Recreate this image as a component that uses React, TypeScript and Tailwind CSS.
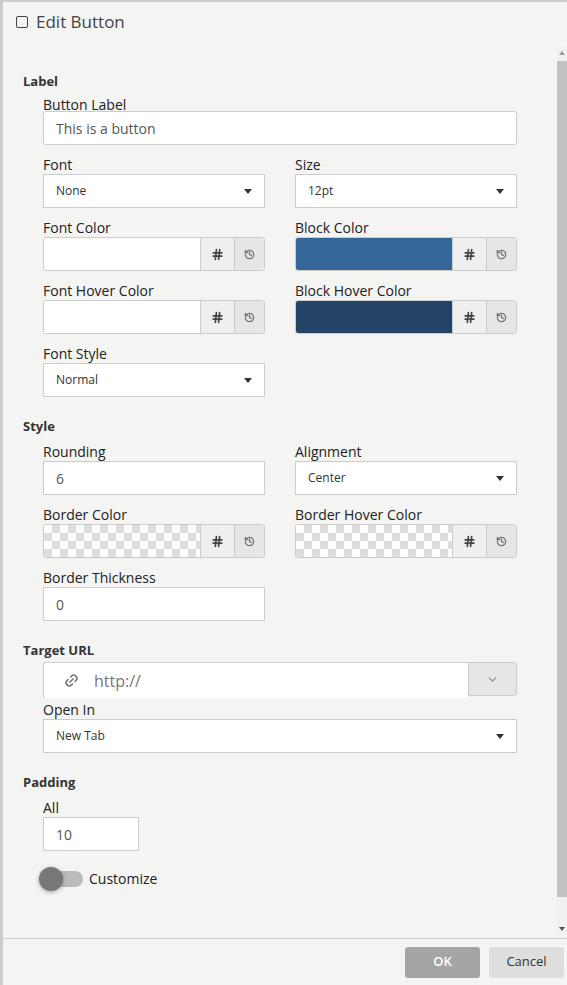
import { ChevronDown, Hash, History, Link2 } from 'lucide-react';

function Caret() {
  return <span className="ml-auto h-0 w-0 border-x-[4px] border-t-[5px] border-x-transparent border-t-[#333]" />;
}

function Select({ value }: { value: string }) {
  return (
    <div className="flex h-[34px] items-center border border-[#ccc] bg-white px-3 text-[12px] text-[#333]">
      {value}
      <Caret />
    </div>
  );
}

function TextInput({ value, className = '' }: { value: string; className?: string }) {
  return (
    <div className={`flex h-[34px] items-center rounded-[3px] border border-[#ccc] bg-white px-3 text-[14px] text-[#555] ${className}`}>
      {value}
    </div>
  );
}

const checker =
  'bg-white bg-[linear-gradient(45deg,#ddd_25%,transparent_25%,transparent_75%,#ddd_75%),linear-gradient(45deg,#ddd_25%,transparent_25%,transparent_75%,#ddd_75%)] bg-[length:16px_16px] bg-[position:0_0,8px_8px]';

function ColorInput({ swatch }: { swatch: string }) {
  return (
    <div className="flex h-[34px] overflow-hidden rounded-[3px] border border-[#ccc]">
      <div className={`flex-1 ${swatch}`} />
      <div className="flex w-[34px] items-center justify-center border-l border-[#ccc] bg-[#efefef]">
        <Hash size={13} strokeWidth={3} className="text-[#444]" />
      </div>
      <div className="flex w-[30px] items-center justify-center border-l border-[#ccc] bg-[#e6e6e6]">
        <History size={11} strokeWidth={3} className="text-[#777]" />
      </div>
    </div>
  );
}

function Field({ label, children }: { label: string; children: React.ReactNode }) {
  return (
    <div>
      <div className="text-[14px] leading-[18px] text-[#222]">{label}</div>
      {children}
    </div>
  );
}

function Section({ title }: { title: string }) {
  return <div className="text-[13px] font-bold leading-[18px] text-[#333]">{title}</div>;
}

export default function App() {
  return (
    <div
      className="flex h-[985px] w-[567px] flex-col border-l-[3px] border-t-2 border-[#ccc] bg-[#f4f4f2]"
      style={{ fontFamily: '"Open Sans", sans-serif' }}
    >
      <div className="flex h-[40px] items-center gap-[8px] pl-[13px] text-[17px] text-[#444]">
        <span className="h-[12px] w-[12px] rounded-[2px] border-[1.5px] border-[#444]" />
        Edit Button
      </div>
      <div className="flex min-h-0 flex-1">
        <div className="flex-1 pl-[20px] pr-[40px] pt-[30px]">
          <Section title="Label" />
          <div className="mt-[6px] flex flex-col gap-[11px] pl-[20px]">
            <Field label="Button Label">
              <div className="mt-[-3px]" />
              <TextInput value="This is a button" />
            </Field>
            <div className="grid grid-cols-2 gap-x-[30px] gap-y-[11px]">
              <Field label="Font"><Select value="None" /></Field>
              <Field label="Size"><Select value="12pt" /></Field>
              <Field label="Font Color"><ColorInput swatch="bg-white" /></Field>
              <Field label="Block Color"><ColorInput swatch="bg-[#336699]" /></Field>
              <Field label="Font Hover Color"><ColorInput swatch="bg-white" /></Field>
              <Field label="Block Hover Color"><ColorInput swatch="bg-[#234466]" /></Field>
              <Field label="Font Style"><Select value="Normal" /></Field>
            </div>
          </div>
          <div className="mt-[20px]"><Section title="Style" /></div>
          <div className="mt-[8px] grid grid-cols-2 gap-x-[30px] gap-y-[11px] pl-[20px]">
            <Field label="Rounding"><TextInput value="6" className="rounded-none" /></Field>
            <Field label="Alignment"><Select value="Center" /></Field>
            <Field label="Border Color"><ColorInput swatch={checker} /></Field>
            <Field label="Border Hover Color"><ColorInput swatch={checker} /></Field>
            <Field label="Border Thickness"><TextInput value="0" className="rounded-none" /></Field>
          </div>
          <div className="mt-[20px]"><Section title="Target URL" /></div>
          <div className="mt-[3px] flex flex-col gap-[9px] pl-[20px]">
            <div className="flex h-[36px]">
              <div className="flex flex-1 items-center gap-[15px] rounded-tl-[3px] border-l border-t border-[#ccc] bg-white pl-[20px] text-[16px] text-[#777]">
                <Link2 size={15} className="-rotate-45 text-[#777]" strokeWidth={2.5} />
                http://
              </div>
              <div className="flex h-[34px] w-[49px] items-center justify-center rounded-r-[3px] border border-[#ccc] bg-[#e6e6e6]">
                <ChevronDown size={13} className="text-[#888]" />
              </div>
            </div>
            <div className="-mt-[6px]">
              <Field label="Open In"><Select value="New Tab" /></Field>
            </div>
          </div>
          <div className="mt-[20px]"><Section title="Padding" /></div>
          <div className="mt-[8px] pl-[20px]">
            <Field label="All"><TextInput value="10" className="w-[96px] rounded-none" /></Field>
            <div className="mt-[17px] flex items-center gap-[6px]">
              <div className="relative h-[16px] w-[40px] rounded-full bg-[#bbb]">
                <span className="absolute -left-[4px] -top-[4px] h-[24px] w-[24px] rounded-full bg-[#777] shadow-[0_1px_4px_rgba(0,0,0,0.35)]" />
              </div>
              <span className="text-[14px] text-[#222]">Customize</span>
            </div>
          </div>
        </div>
        <div className="mt-[5px] mb-[3px] flex w-[10px] flex-col items-center bg-[#f1f1f1]">
          <span className="mt-[4px] h-0 w-0 border-x-[3px] border-b-[4px] border-x-transparent border-b-[#999]" />
          <div className="mt-[6px] w-full flex-1 bg-[#c1c1c1] mb-[30px]" />
          <span className="mb-[4px] h-0 w-0 border-x-[3px] border-t-[4px] border-x-transparent border-t-[#555]" />
        </div>
      </div>
      <div className="flex h-[47px] items-center justify-end gap-[9px] border-t border-[#ccc] pr-[3px]">
        <button className="h-[31px] w-[75px] rounded-[3px] bg-[#a5a5a5] text-[13px] font-semibold text-white">OK</button>
        <button className="h-[31px] w-[75px] rounded-[3px] bg-[#dedede] text-[13px] text-[#333]">Cancel</button>
      </div>
    </div>
  );
}
